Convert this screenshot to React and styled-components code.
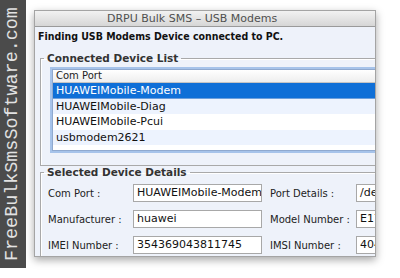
import React from "react";
import styled, { createGlobalStyle } from "styled-components";

const GlobalStyle = createGlobalStyle`
  html, body {
    margin: 0;
    padding: 0;
    background: #fff;
  }
  body {
    width: 400px;
    height: 278px;
    overflow: hidden;
    font-family: "DejaVu Sans", "Liberation Sans", sans-serif;
  }
`;

const Page = styled.div`
  display: flex;
  align-items: flex-start;
  width: 400px;
  height: 278px;
  background: #fff;
`;

const Brand = styled.div`
  flex: none;
  width: 26px;
  height: 268px;
  background: #4b4b4b;
  color: #e2e2e2;
  font-family: "Liberation Mono", monospace;
  font-size: 18.4px;
  line-height: 26px;
  writing-mode: vertical-rl;
  transform: rotate(180deg);
  display: flex;
  align-items: center;
  justify-content: center;
`;

const Window = styled.div`
  flex: none;
  margin: 10px 0 0 8px;
  width: 340px;
  height: 245px;
  overflow: hidden;
  background: #eef2fa;
  border: 1px solid #a4a4a4;
  box-shadow: 0 3px 8px rgba(0, 0, 0, 0.35);
`;

const TitleBar = styled.div`
  height: 15px;
  padding-left: 72px;
  background: linear-gradient(#f2f2f2, #d6d6d6);
  border-bottom: 1px solid #9a9a9a;
  color: #505050;
  font-size: 11px;
  line-height: 15px;
  white-space: nowrap;
`;

const Content = styled.div`
  width: 440px;
  padding: 0 0 0 3px;
`;

const Heading = styled.div`
  height: 19px;
  font-family: "DejaVu Sans Condensed", "DejaVu Sans", sans-serif;
  font-stretch: condensed;
  font-size: 10.5px;
  font-weight: bold;
  line-height: 19px;
  color: #111;
  white-space: nowrap;
`;

const Group = styled.fieldset`
  margin: ${(p) => p.$top}px 0 0 2px;
  padding: ${(p) => p.$pad};
  border: 1px solid #a9a9a9;
  border-right: none;
  box-shadow: inset 1px 1px 0 #fff;
`;

const Legend = styled.legend`
  padding: 0 3px;
  margin-left: ${(p) => p.$shift}px;
  font-size: 10.5px;
  font-weight: bold;
  color: #333;
  line-height: 12px;
`;

const ListBox = styled.div`
  background: #fff;
  border: 1px solid #8fa9cf;
  box-shadow: 0 0 0 2px #a6c3ea;
  height: 80px;
`;

const ListHeader = styled.div`
  height: 12px;
  padding-left: 3px;
  font-size: 10px;
  line-height: 12px;
  color: #222;
  background: linear-gradient(#ffffff, #eeeeee);
  border-bottom: 1px solid #c4c4c4;
`;

const Row = styled.div`
  height: 15.5px;
  padding-left: 3px;
  font-size: 11px;
  line-height: 15.5px;
  color: ${(p) => (p.$selected ? "#fff" : "#111")};
  background: ${(p) => (p.$selected ? "#0f6fd7" : p.$alt ? "#edf3fe" : "#fff")};
  border-bottom: ${(p) => (p.$selected ? "1px solid #6d9fdc" : "none")};
  box-sizing: border-box;
`;

const Fields = styled.div`
  display: grid;
  grid-template-columns: 85px 129px 94px 160px;
  row-gap: 8px;
  align-items: center;
`;

const Label = styled.div`
  font-size: 10px;
  color: #222;
  white-space: nowrap;
  margin-left: ${(p) => (p.$second ? "8px" : "0")};
`;

const Input = styled.div`
  height: 16px;
  padding-left: 3px;
  background: #fff;
  border: 1px solid #a8a8a8;
  font-size: 11px;
  line-height: 16px;
  color: #111;
  white-space: nowrap;
  overflow: hidden;
`;

const devices = [
  "HUAWEIMobile-Modem",
  "HUAWEIMobile-Diag",
  "HUAWEIMobile-Pcui",
  "usbmodem2621",
];

const details = [
  ["Com Port :", "HUAWEIMobile-Modem", "Port Details :", "/dev/cu.HUAWEIMobile-Modem"],
  ["Manufacturer :", "huawei", "Model Number :", "E173"],
  ["IMEI Number :", "354369043811745", "IMSI Number :", "404685505601234"],
];

export default function App() {
  return (
    <Page>
      <GlobalStyle />
      <Brand>FreeBulkSmsSoftware.com</Brand>
      <Window>
        <TitleBar>DRPU Bulk SMS – USB Modems</TitleBar>
        <Content>
          <Heading>Finding USB Modems Device connected to PC.</Heading>
          <Group $top={6} $pad="5px 0 14px 11px">
            <Legend $shift={-8}>Connected Device List</Legend>
            <ListBox>
              <ListHeader>Com Port</ListHeader>
              {devices.map((d, i) => (
                <Row key={d} $selected={i === 0} $alt={i % 2 === 1}>
                  {d}
                </Row>
              ))}
            </ListBox>
          </Group>
          <Group $top={0} $pad="6px 0 10px 7px">
            <Legend $shift={-4}>Selected Device Details</Legend>
            <Fields>
              {details.map(([l1, v1, l2, v2]) => (
                <React.Fragment key={l1}>
                  <Label>{l1}</Label>
                  <Input>{v1}</Input>
                  <Label $second>{l2}</Label>
                  <Input>{v2}</Input>
                </React.Fragment>
              ))}
            </Fields>
          </Group>
        </Content>
      </Window>
    </Page>
  );
}
